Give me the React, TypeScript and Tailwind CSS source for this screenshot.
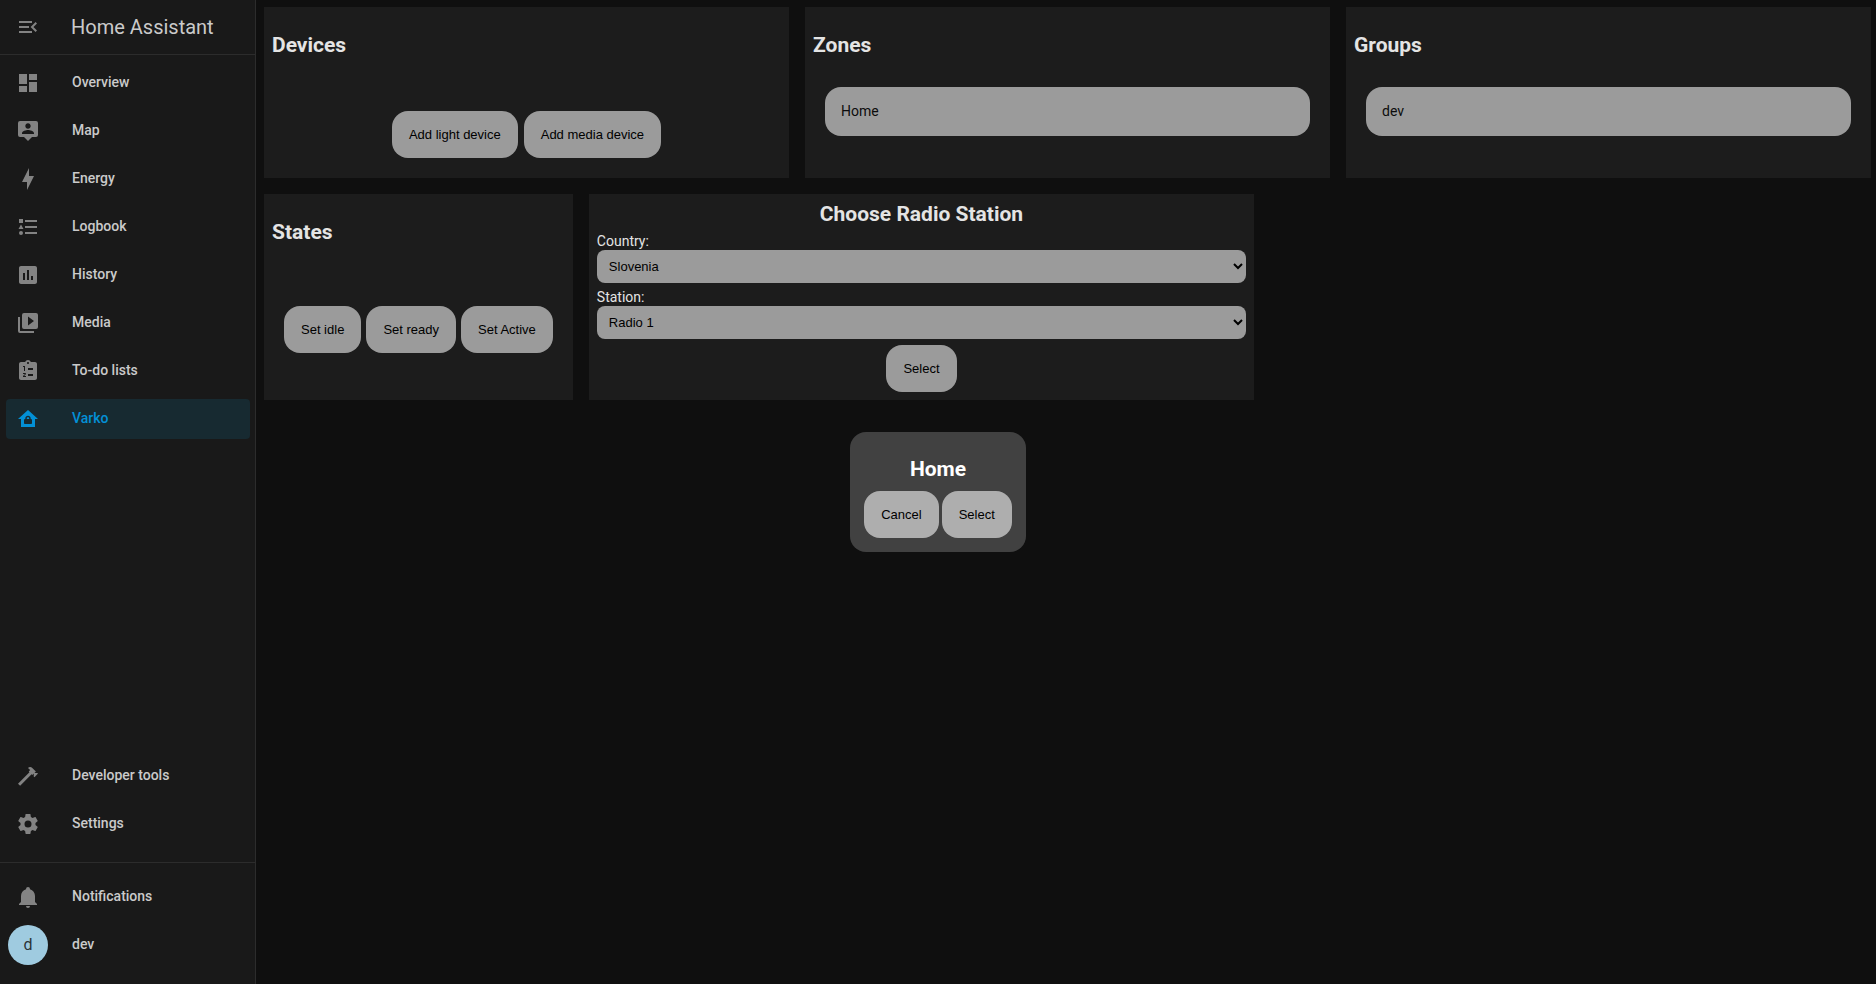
import { useId, type ReactNode } from "react";

const icons = {
  menuOpen:
    "M21,15.61L19.59,17L14.58,12L19.59,7L21,8.39L17.44,12L21,15.61M3,6H16V8H3V6M3,13V11H13V13H3M3,18V16H16V18H3Z",
  dashboard: "M13,3V9H21V3M13,21H21V11H13M3,21H11V15H3M3,13H11V3H3V13Z",
  map: "M20,2H4A2,2 0 0,0 2,4V16A2,2 0 0,0 4,18H8L12,22L16,18H20A2,2 0 0,0 22,16V4A2,2 0 0,0 20,2M12,4.3C13.5,4.3 14.7,5.5 14.7,7C14.7,8.5 13.5,9.7 12,9.7C10.5,9.7 9.3,8.5 9.3,7C9.3,5.5 10.5,4.3 12,4.3M18,15H6V14.1C6,12.1 10,11 12,11C14,11 18,12.1 18,14.1V15Z",
  bolt: "M11 15H6L13 1V9H18L11 23V15Z",
  logbook:
    "M5,9.5L7.5,14H2.5L5,9.5M3,4H7V8H3V4M5,20A2,2 0 0,0 7,18A2,2 0 0,0 5,16A2,2 0 0,0 3,18A2,2 0 0,0 5,20M9,5V7H21V5H9M9,19H21V17H9V19M9,13H21V11H9V13Z",
  chart:
    "M9 17H7V10H9V17M13 17H11V7H13V17M17 17H15V13H17V17M19 3H5C3.89 3 3 3.89 3 5V19C3 20.1 3.9 21 5 21H19C20.1 21 21 20.1 21 19V5C21 3.89 20.1 3 19 3Z",
  media:
    "M4,6H2V20A2,2 0 0,0 4,22H18V20H4V6M20,2H8A2,2 0 0,0 6,4V16A2,2 0 0,0 8,18H20A2,2 0 0,0 22,16V4A2,2 0 0,0 20,2M12,14.5V5.5L18,10L12,14.5Z",
  todo: "M19 3H14.82C14.4 1.84 13.3 1 12 1S9.6 1.84 9.18 3H5C3.9 3 3 3.9 3 5V19C3 20.1 3.9 21 5 21H19C20.1 21 21 20.1 21 19V5C21 3.9 20.1 3 19 3M12 3C12.55 3 13 3.45 13 4S12.55 5 12 5 11 4.55 11 4 11.45 3 12 3M7 7H9V12H8V8H7V7M10 17V18H7V17.08L9 15H7V14H9.25C9.66 14 10 14.34 10 14.75C10 14.95 9.92 15.14 9.79 15.27L8.12 17H10M12 9H17V11H12V9M12 15H17V17H12V15Z",
  homeLock:
    "M12 3L2 12H5V20H19V12H22L12 3M12 8.7C13.5 8.7 14.7 9.8 14.7 11.2V12C15.4 12 16 12.5 16 13.2V16C16 16.6 15.5 17 14.8 17H9.2C8.5 17 8 16.6 8 16V13.2C8 12.5 8.6 12 9.3 12V11.2C9.3 9.8 10.5 8.7 12 8.7M12 10.2C11.3 10.2 10.8 10.6 10.8 11.2V12H13.2V11.2C13.2 10.6 12.7 10.2 12 10.2Z",
  hammer:
    "M2,19.63L13.43,8.2L12.72,7.5L14.14,6.07L12,3.89C13.2,2.7 15.09,2.7 16.27,3.89L19.87,7.5L18.45,8.91H21.29L22,9.62L18.45,13.21L17.74,12.5V9.62L16.27,11.04L15.56,10.33L4.13,21.76L2,19.63Z",
  cog: "M12,15.5A3.5,3.5 0 0,1 8.5,12A3.5,3.5 0 0,1 12,8.5A3.5,3.5 0 0,1 15.5,12A3.5,3.5 0 0,1 12,15.5M19.43,12.97C19.47,12.65 19.5,12.33 19.5,12C19.5,11.67 19.47,11.34 19.43,11L21.54,9.37C21.73,9.22 21.78,8.95 21.66,8.73L19.66,5.27C19.54,5.05 19.27,4.96 19.05,5.05L16.56,6.05C16.04,5.66 15.5,5.32 14.87,5.07L14.5,2.42C14.46,2.18 14.25,2 14,2H10C9.75,2 9.54,2.18 9.5,2.42L9.13,5.07C8.5,5.32 7.96,5.66 7.44,6.05L4.95,5.05C4.73,4.96 4.46,5.05 4.34,5.27L2.34,8.73C2.21,8.95 2.27,9.22 2.46,9.37L4.57,11C4.53,11.34 4.5,11.67 4.5,12C4.5,12.33 4.53,12.65 4.57,12.97L2.46,14.63C2.27,14.78 2.21,15.05 2.34,15.27L4.34,18.73C4.46,18.95 4.73,19.03 4.95,18.95L7.44,17.94C7.96,18.34 8.5,18.68 9.13,18.93L9.5,21.58C9.54,21.82 9.75,22 10,22H14C14.25,22 14.46,21.82 14.5,21.58L14.87,18.93C15.5,18.67 16.04,18.34 16.56,17.94L19.05,18.95C19.27,19.03 19.54,18.95 19.66,18.73L21.66,15.27C21.78,15.05 21.73,14.78 21.54,14.63L19.43,12.97Z",
  bell: "M21,19V20H3V19L5,17V11C5,7.9 7.03,5.17 10,4.29C10,4.19 10,4.1 10,4A2,2 0 0,1 12,2A2,2 0 0,1 14,4C14,4.1 14,4.19 14,4.29C16.97,5.17 19,7.9 19,11V17L21,19M14,21A2,2 0 0,1 12,23A2,2 0 0,1 10,21",
};

type IconName = keyof typeof icons;

function Icon({ name }: { name: IconName }) {
  return (
    <svg viewBox="0 0 24 24" className="size-6 shrink-0" fill="currentColor" fillRule="evenodd" aria-hidden="true">
      <path d={icons[name]} />
    </svg>
  );
}

const mainNav: { label: string; icon: IconName; active?: boolean }[] = [
  { label: "Overview", icon: "dashboard" },
  { label: "Map", icon: "map" },
  { label: "Energy", icon: "bolt" },
  { label: "Logbook", icon: "logbook" },
  { label: "History", icon: "chart" },
  { label: "Media", icon: "media" },
  { label: "To-do lists", icon: "todo" },
  { label: "Varko", icon: "homeLock", active: true },
];

function NavItem({ label, icon, active = false }: { label: string; icon: IconName; active?: boolean }) {
  return (
    <a
      href="#"
      aria-current={active ? "page" : undefined}
      className={
        active
          ? "flex h-10 items-center gap-8 rounded bg-[#172a31] px-[10px] text-[#0390d6]"
          : "flex h-10 items-center gap-8 rounded px-[10px] text-[#838383]"
      }
    >
      <Icon name={icon} />
      <span className={active ? "pb-[2px]" : "pb-[2px] text-[#cacaca]"}>{label}</span>
    </a>
  );
}

function Sidebar() {
  return (
    <aside className="flex w-64 shrink-0 flex-col border-r border-[#2c2c2c] bg-[#191919] text-sm font-medium">
      <div className="flex h-[55px] items-center gap-[31px] border-b border-[#2c2c2c] px-4 text-[#838383]">
        <button type="button" aria-label="Toggle sidebar">
          <Icon name="menuOpen" />
        </button>
        <span className="text-xl font-normal text-[#cacaca]">Home Assistant</span>
      </div>
      <nav className="flex flex-1 flex-col gap-2 pt-2 pr-[5px] pb-[18px] pl-[6px]">
        {mainNav.map((item) => (
          <NavItem key={item.label} {...item} />
        ))}
        <div className="flex-1" />
        <NavItem label="Developer tools" icon="hammer" />
        <NavItem label="Settings" icon="cog" />
      </nav>
      <div className="flex flex-col gap-2 border-t border-[#2c2c2c] pt-[14px] pr-[5px] pb-[19px] pl-[6px]">
        <NavItem label="Notifications" icon="bell" />
        <a href="#" className="flex h-10 items-center gap-6 px-[2px] text-[#cacaca]">
          <span className="flex size-10 items-center justify-center rounded-full bg-[#9fcbe0] text-base font-normal text-[#2b3337]">
            d
          </span>
          <span className="pb-[2px]">dev</span>
        </a>
      </div>
    </aside>
  );
}

function Button({ children, bright = false }: { children: ReactNode; bright?: boolean }) {
  return (
    <button
      type="button"
      className={
        bright
          ? "rounded-2xl bg-[#aeaeae] px-[17px] py-4 font-['Liberation_Sans',Arial,sans-serif] text-[13px] leading-[15px] text-black"
          : "rounded-2xl bg-[#9b9b9b] px-[17px] py-4 font-['Liberation_Sans',Arial,sans-serif] text-[13px] leading-[15px] text-black"
      }
    >
      {children}
    </button>
  );
}

function Card({ title, children }: { title: string; children: ReactNode }) {
  return (
    <section className="flex flex-col bg-[#1c1c1c] p-2">
      <h2 className="pt-[18px] pb-[17px] text-[21px] leading-[25px] font-bold text-[#e4e4e4]">{title}</h2>
      {children}
    </section>
  );
}

function Entry({ children }: { children: ReactNode }) {
  return (
    <div className="p-3">
      <button type="button" className="w-full rounded-2xl bg-[#9b9b9b] p-4 text-left text-sm leading-[17px] text-[#0c0c0c]">
        {children}
      </button>
    </div>
  );
}

function Field({ label, options }: { label: string; options: string[] }) {
  const id = useId();
  return (
    <div className="flex flex-col text-sm">
      <label htmlFor={id} className="leading-[17px] text-[#e4e4e4]">
        {label}
      </label>
      <select
        id={id}
        className="h-[33px] rounded-lg bg-[#9b9b9b] px-2 font-['Liberation_Sans',Arial,sans-serif] text-[13px] text-black"
      >
        {options.map((option) => (
          <option key={option}>{option}</option>
        ))}
      </select>
    </div>
  );
}

export default function App() {
  return (
    <div className="flex min-h-screen bg-[#0f0f0f] font-[Roboto,sans-serif]">
      <Sidebar />
      <main className="flex min-w-0 flex-1 flex-col gap-4 py-[7px] pr-[5px] pl-2">
        <div className="grid grid-cols-3 gap-4">
          <Card title="Devices">
            <div className="flex justify-center gap-[6px] px-3 pt-9 pb-3">
              <Button>Add light device</Button>
              <Button>Add media device</Button>
            </div>
          </Card>
          <Card title="Zones">
            <Entry>Home</Entry>
          </Card>
          <Card title="Groups">
            <Entry>dev</Entry>
          </Card>
        </div>
        <div className="flex gap-4">
          <Card title="States">
            <div className="flex flex-1 items-center gap-[5px] px-3 pt-1">
              <Button>Set idle</Button>
              <Button>Set ready</Button>
              <Button>Set Active</Button>
            </div>
          </Card>
          <section className="flex w-[41.4%] flex-col gap-[6px] bg-[#1c1c1c] p-2">
            <h2 className="text-center text-[21px] leading-[25px] font-bold text-[#e4e4e4]">Choose Radio Station</h2>
            <Field label="Country:" options={["Slovenia"]} />
            <Field label="Station:" options={["Radio 1"]} />
            <div className="flex justify-center">
              <Button>Select</Button>
            </div>
          </section>
        </div>
      </main>
      <div className="pointer-events-none fixed inset-0 flex items-center justify-center">
        <div
          role="dialog"
          aria-label="Home"
          className="pointer-events-auto flex flex-col items-center rounded-2xl bg-[#414141] p-[14px]"
        >
          <h2 className="pt-[11px] pb-[9px] text-[21px] leading-[25px] font-bold text-white">Home</h2>
          <div className="flex gap-[3px]">
            <Button bright>Cancel</Button>
            <Button bright>Select</Button>
          </div>
        </div>
      </div>
    </div>
  );
}
